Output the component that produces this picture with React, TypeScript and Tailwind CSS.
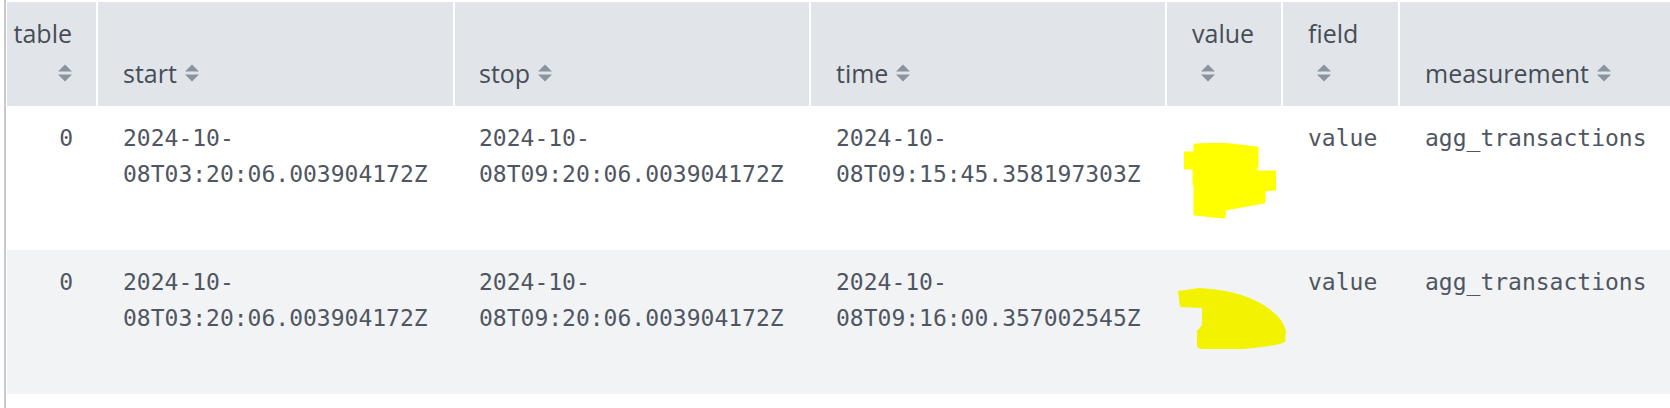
import React from "react";

const SortIcon = () => (
  <svg width="14" height="18" viewBox="0 0 14 18" className="inline-block align-middle" aria-hidden="true">
    <path d="M7 0.5 L14 7.5 L0 7.5 Z" fill="#8a949f" />
    <path d="M0 10.5 L14 10.5 L7 17.5 Z" fill="#8a949f" />
  </svg>
);

const Blob1 = () => (
  <svg width="92" height="76" viewBox="0 0 92 76" className="absolute left-[17px] top-[37px]" aria-hidden="true">
    <path
      d="M11,2 L38,1 L73,5 L73,22 L71,29 L91,29 L91,46 L80,47 L80,59 L41,66 L40,74 L11,71 L11,43 L10,41 L10,25 L1,25 L1,10 L11,10 Z"
      fill="#ffff00"
      stroke="#ffff00"
      strokeWidth="3"
      strokeLinejoin="round"
    />
  </svg>
);

const Blob2 = () => (
  <svg width="112" height="64" viewBox="0 0 112 64" className="absolute left-[10px] top-[38px]" aria-hidden="true">
    <path
      d="M1,3 L22,0 Q60,2 83,15 Q106,28 109,43 L108,54 Q100,58 66,61 L24,61 L20,59 L20,43 L25,37 L25,20 L3,19 Z"
      fill="#f3f300"
    />
  </svg>
);

const head = "font-['Open_Sans',sans-serif] text-[25px] leading-[36px] text-[#464d57]";
const mono = "font-['DejaVu_Sans_Mono',monospace] text-[23px] leading-[36px] text-[#4f5661]";

type Row = { start: string; stop: string; time: string };

const rows: Row[] = [
  { start: "08T03:20:06.003904172Z", stop: "08T09:20:06.003904172Z", time: "08T09:15:45.358197303Z" },
  { start: "08T03:20:06.003904172Z", stop: "08T09:20:06.003904172Z", time: "08T09:16:00.357002545Z" },
];

export default function App() {
  return (
    <div className="w-[1670px] h-[408px] bg-white pl-[4px] overflow-hidden">
      <div className="h-full border-l-2 border-[#c6c9ce] pl-px pt-[2px]">
        {/* header */}
        <div className={`flex h-[104px] ${head}`}>
          <div className="w-[91px] shrink-0 border-r-2 border-white bg-[#e1e5e9] flex flex-col justify-end items-end pl-[4px] pr-[24px] pb-[15px]">
            <div className="pb-[4px]">table</div>
            <div className="h-[36px] flex items-center"><SortIcon /></div>
          </div>
          <div className="w-[357px] shrink-0 border-r-2 border-white bg-[#e1e5e9] flex items-end pl-[25px] pb-[15px]">
            <div className="flex items-center h-[36px]">start<span className="ml-[8px] flex"><SortIcon /></span></div>
          </div>
          <div className="w-[356px] shrink-0 border-r-2 border-white bg-[#e1e5e9] flex items-end pl-[24px] pb-[15px]">
            <div className="flex items-center h-[36px]">stop<span className="ml-[8px] flex"><SortIcon /></span></div>
          </div>
          <div className="w-[356px] shrink-0 border-r-2 border-white bg-[#e1e5e9] flex items-end pl-[25px] pb-[15px]">
            <div className="flex items-center h-[36px]">time<span className="ml-[8px] flex"><SortIcon /></span></div>
          </div>
          <div className="w-[116px] shrink-0 border-r-2 border-white bg-[#e1e5e9] flex flex-col justify-end items-start pl-[25px] pb-[15px]">
            <div className="pb-[4px]">value</div>
            <div className="h-[36px] flex items-center pl-[9px]"><SortIcon /></div>
          </div>
          <div className="w-[117px] shrink-0 border-r-2 border-white bg-[#e1e5e9] flex flex-col justify-end items-start pl-[25px] pb-[15px]">
            <div className="pb-[4px]">field</div>
            <div className="h-[36px] flex items-center pl-[9px]"><SortIcon /></div>
          </div>
          <div className="flex-1 bg-[#e1e5e9] flex items-end pl-[25px] pb-[15px]">
            <div className="flex items-center h-[36px]">measurement<span className="ml-[8px] flex"><SortIcon /></span></div>
          </div>
        </div>
        {/* body */}
        {rows.map((r, i) => (
          <div key={i} className={`flex h-[144px] ${mono} ${i % 2 === 1 ? "bg-[#f2f3f5]" : "bg-white"}`}>
            <div className="w-[91px] shrink-0 text-right pr-[25px] pt-[14px]">0</div>
            <div className="w-[357px] shrink-0 pl-[25px] pt-[14px]">
              <div>2024-10-</div>
              <div>{r.start}</div>
            </div>
            <div className="w-[356px] shrink-0 pl-[24px] pt-[14px]">
              <div>2024-10-</div>
              <div>{r.stop}</div>
            </div>
            <div className="w-[356px] shrink-0 pl-[25px] pt-[14px]">
              <div>2024-10-</div>
              <div>{r.time}</div>
            </div>
            <div className="w-[116px] shrink-0 relative">
              {i === 0 ? <Blob1 /> : <Blob2 />}
            </div>
            <div className="w-[117px] shrink-0 pl-[25px] pt-[14px]">value</div>
            <div className="flex-1 pl-[25px] pt-[14px] whitespace-nowrap">agg_transactions</div>
          </div>
        ))}
      </div>
    </div>
  );
}
